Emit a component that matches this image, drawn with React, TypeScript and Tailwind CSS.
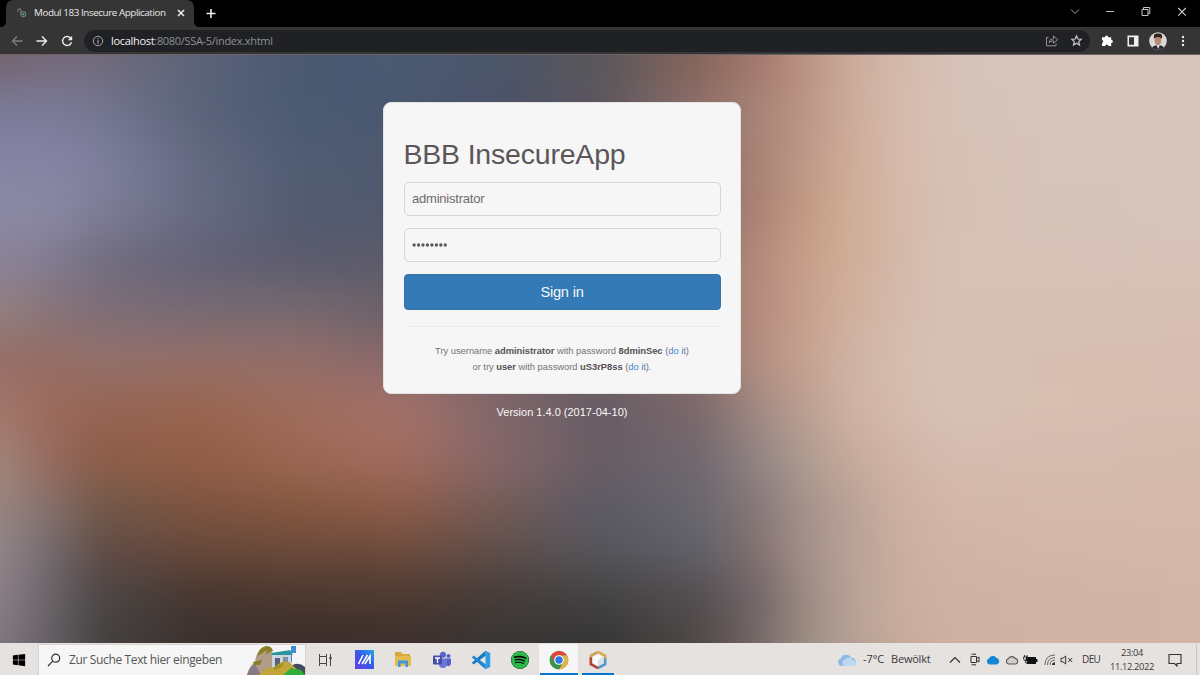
import type { ReactNode } from 'react';
import { FaWindows, FaSpotify } from 'react-icons/fa';

type Row = { y: number; c: string };

const XS = [0, 50, 100, 200, 300, 400, 500, 600, 700, 760, 800, 850, 900, 950, 1050, 1200];

const ROWS: Row[] = [
  { y: 5, c: '74656f 75697a 716a7b 5b6378 4a5870 4a5a72 4b5468 5a5658 85655b a5786d b88f82 cbab9b d4b9ab d6c2b8 d8c6bc d8c6bd' },
  { y: 55, c: '7b7a99 7b7b99 74768f 596379 4a5a72 49586f 4b5369 5b5560 90706a a88577 ba9184 ccab99 d6baad d6c2b7 d7c5bb d7c5bc' },
  { y: 105, c: '8583a2 8383a3 7e7f9e 63697f 4f5c72 4e586e 4b5369 5b5257 906a62 a88476 bb9787 cfab97 d6baac d6c1b5 d7c4ba d7c4bb' },
  { y: 155, c: '8c8aa5 8a88a4 7f7e97 656a82 535b70 50596d 4b5369 5b5257 906a62 ac8377 c0977f d1ae96 d5b8aa d6c1b5 d6c3b9 d7c4ba' },
  { y: 205, c: '8a8298 827c92 716d80 636176 5b5b6d 5c5b6b 5b5867 6b5f62 966f64 b48b7d c59d88 d1ae96 d4b8aa d6c2b6 d6c2b7 d7c3b9' },
  { y: 255, c: '937f80 887479 7e6d77 776a74 756970 6b6068 655c66 6b5f62 986f67 b48b7d c59e8b d1b09c d4baad d6c2b5 d6c1b5 d7c0b5' },
  { y: 305, c: '966f68 966c64 93706a 946e67 936e69 89676a 785f64 6b5f62 8b6d69 b59082 c59f8d cfb2a4 d5bdaf d5c2b6 d6bfb1 d6bdb1' },
  { y: 355, c: 'a3766b 9a6a5a 966454 98654f a06c5c a57269 80676a 665c65 7c686b a28b83 b99c90 cfb2a4 d5baad d5c2b6 d7bfb1 d7bcb0' },
  { y: 405, c: 'a18479 96695f 8c5d48 935d46 9b6753 a16b5d 84676a 685c64 70686f 948484 ab9a8f c6a99a d0b5a7 d5bbae d5baae d4b9ad' },
  { y: 455, c: '97867f 84706c 705848 7d5340 85573f 8c5b48 735b56 5b5a66 69666d 887878 a08e88 b8a196 cdb0a1 d2b6a9 d3b8ab d4b8ab' },
  { y: 495, c: '93858a 736a70 604a45 674839 6b493a 6d4b3d 5f4e4b 55555b 61606a 84726f a28f8a b8a196 caae9f d0b4a6 d2b6a9 d3b7aa' },
  { y: 540, c: '8c8088 6a6468 4c4646 46362f 4b382f 4d3a31 463c39 444243 544e50 74666a 98867f b7a297 c9ad9f ceb2a5 cfb3a5 d2b5a8' },
  { y: 588, c: '83777e 645f66 44413f 3a2f2d 3b2d2b 3d2e2c 373533 343434 4f4846 776968 988a80 b5a095 c7aa9c ceb1a4 d0b3a6 d2b5a8' },
];

function Backdrop() {
  return (
    <svg className="absolute inset-0 h-full w-full" viewBox="0 0 1200 588" preserveAspectRatio="none">
      <defs>
        <filter id="soft" x="-60" y="-60" width="1320" height="708" filterUnits="userSpaceOnUse" colorInterpolationFilters="sRGB">
          <feGaussianBlur stdDeviation="16 20" />
        </filter>
        {ROWS.map((r, i) => (
          <linearGradient key={r.y} id={`row${i}`} gradientUnits="userSpaceOnUse" x1="0" x2="1200" y1="0" y2="0">
            {r.c.split(' ').map((c, k) => (
              <stop key={k} offset={XS[k] / 1200} stopColor={`#${c}`} />
            ))}
          </linearGradient>
        ))}
      </defs>
      <rect width="1200" height="588" fill="#7a6866" />
      <g filter="url(#soft)">
        {ROWS.map((r, i) => {
          const top = i === 0 ? -100 : (ROWS[i - 1].y + r.y) / 2;
          const bottom = i === ROWS.length - 1 ? 700 : (r.y + ROWS[i + 1].y) / 2;
          return <rect key={r.y} x="-60" width="1320" y={top} height={bottom - top + 1} fill={`url(#row${i})`} />;
        })}
      </g>
    </svg>
  );
}

function Icon({ w, h, children, className = '' }: { w: number; h: number; children: ReactNode; className?: string }) {
  return (
    <svg width={w} height={h} viewBox={`0 0 ${w} ${h}`} fill="none" className={`block shrink-0 ${className}`}>
      {children}
    </svg>
  );
}

function TabStrip() {
  return (
    <div className="flex h-[27px] bg-black">
      <Icon w={6} h={27}><path d="M0 27Q6 27 6 21V27Z" fill="#353535" /></Icon>
      <div className="flex w-[188px] items-center rounded-t-[7px] bg-[#353535] pb-px">
        <Icon w={10} h={10} className="ml-[11px]">
          <path d="M1 4V2.3Q1 .8 2.5 .8T4 2.3V6.5" stroke="#777" strokeWidth="1.2" />
          <circle cx="6.3" cy="6.3" r="2.4" stroke="#6c7b7b" strokeWidth="1.3" />
          <circle cx="6.3" cy="6.3" r=".9" fill="#2dd4cf" />
        </Icon>
        <span className="ml-[7px] w-[132px] text-[9.8px] leading-[14px] tracking-[-0.41px] whitespace-nowrap text-[#e8e8e8]">Modul 183 Insecure Application</span>
        <Icon w={8} h={8} className="ml-[11px]"><path d="M1 1L7 7M7 1L1 7" stroke="#eee" strokeWidth="1.5" /></Icon>
      </div>
      <Icon w={6} h={27}><path d="M0 21Q0 27 6 27H0Z" fill="#353535" /></Icon>
      <Icon w={10} h={27} className="ml-[6px]"><path d="M.5 13.5H9.5M5 9V18" stroke="#eee" strokeWidth="1.6" /></Icon>
      <div className="ml-auto flex h-6 items-center">
        <Icon w={10} h={24} className="mr-[25px]"><path d="M1 9.5L5 13.5L9 9.5" stroke="#aaa" /></Icon>
        <Icon w={10} h={24} className="mr-[26px]"><path d="M1 11.5H9" stroke="#bbb" /></Icon>
        <Icon w={10} h={24} className="mr-[26px]"><path d="M1 9.5H7V15.5H1ZM2.5 9.5V7.5H8.8V13.7H7" stroke="#c5c5c5" /></Icon>
        <Icon w={10} h={24} className="mr-[13px]"><path d="M1.2 8L8.8 15.6M8.8 8L1.2 15.6" stroke="#ccc" strokeWidth="1.1" /></Icon>
      </div>
    </div>
  );
}

function Toolbar() {
  return (
    <div className="flex h-[28px] items-center border-b border-[#6b6365] bg-[#353535]">
      <Icon w={12} h={12} className="ml-[11px]"><path d="M11.5 6H1.5M6 1.5L1.5 6L6 10.5" stroke="#7d7d7d" strokeWidth="1.3" /></Icon>
      <Icon w={12} h={12} className="ml-[13px]"><path d="M.5 6H10.5M6 1.5L10.5 6L6 10.5" stroke="#eee" strokeWidth="1.4" /></Icon>
      <Icon w={12} h={12} className="ml-[13px]">
        <path d="M9.6 3.2A4.5 4.5 0 1 0 10.4 7.2" stroke="#eee" strokeWidth="1.4" />
        <path d="M11.2 .8V5.2H6.8Z" fill="#eee" />
      </Icon>
      <div className="ml-[11px] flex h-[22px] w-[1006px] items-center rounded-full bg-[#202124]">
        <Icon w={12} h={12} className="ml-[8px]">
          <circle cx="6" cy="6" r="4.7" stroke="#a5a7ab" />
          <path d="M6 5.2V8.5M6 3.2V4.3" stroke="#a5a7ab" strokeWidth="1.2" />
        </Icon>
        <span className="ml-[7px] text-[11px] leading-[16px] tracking-[-0.31px] whitespace-nowrap text-[#8f9093]"><span className="text-[#f1f1f1]">localhost</span>:8080/SSA-5/index.xhtml</span>
        <Icon w={14} h={13} className="ml-auto">
          <path d="M3.5 3.5H1.5V11.8H11V9.5" stroke="#939393" />
          <path d="M4 8.8Q4.5 4.7 8.5 4.6V2L12.7 5.7L8.5 9.2V6.8Q5.5 6.8 4 8.8Z" stroke="#939393" />
        </Icon>
        <Icon w={13} h={13} className="mr-[7px] ml-[11px]">
          <path d="M6.5 1.9L7.9 5L11.2 5.3L8.7 7.6L9.5 11L6.5 9.2L3.5 11L4.3 7.6L1.8 5.3L5.1 5Z" stroke="#ccc" strokeWidth="1.2" />
        </Icon>
      </div>
      <Icon w={13} h={13} className="ml-[11px]">
        <path d="M1 3.2H4A1.6 1.6 0 0 1 7.2 3.2H10.2V5.8A1.6 1.6 0 0 1 10.2 9.1V12H7.5A1.6 1.6 0 0 0 4.3 12H1V9.2A1.7 1.7 0 0 0 1 6Z" fill="#fff" />
      </Icon>
      <Icon w={12} h={12} className="ml-[13px]"><path d="M.5 .5H11.5V11.5H.5ZM2 2.2V9.8H7V2.2Z" fill="#f1f1f1" fillRule="evenodd" /></Icon>
      <Icon w={18} h={18} className="ml-[10px]">
        <clipPath id="avatar"><circle cx="9" cy="9" r="8.8" /></clipPath>
        <g clipPath="url(#avatar)">
          <rect width="18" height="18" fill="#dcd7d4" />
          <path d="M2 18Q3 13 9 13.2Q15 13 16 18Z" fill="#252832" />
          <path d="M7 12H11L9.3 17Z" fill="#f1eeee" />
          <ellipse cx="9" cy="8.5" rx="3.3" ry="5" fill="#b88874" />
          <path d="M5.2 7Q3.5 1.4 9 1.6Q14.5 1.4 12.8 7Q12 5 9 5.1Q6 5 5.2 7Z" fill="#292321" />
        </g>
      </Icon>
      <Icon w={4} h={12} className="ml-[14px]">
        <circle cx="2" cy="2" r="1.2" fill="#eee" /><circle cx="2" cy="6" r="1.2" fill="#eee" /><circle cx="2" cy="10" r="1.2" fill="#eee" />
      </Icon>
    </div>
  );
}

function LoginPage() {
  return (
    <main className="relative h-[588px] overflow-hidden font-['Liberation_Sans',Arial,sans-serif]">
      <Backdrop />
      <div className="relative ml-[383px] w-[358px] pt-[47px]">
        <form className="h-[292px] rounded-[8px] border border-[#e4e2e2] bg-[#f6f6f6] px-[19.5px] pt-[33px]" onSubmit={(e) => e.preventDefault()}>
          <h1 className="mb-[9px] h-[37px] text-[28.5px] leading-[36px] tracking-[-0.2px] whitespace-nowrap text-[#5c5559]">BBB InsecureApp</h1>
          <input className="mb-3 block h-[34px] w-[317px] rounded-[5px] border border-[#d7d5d5] bg-transparent px-[7.5px] pb-[2px] text-[13px] tracking-[-0.22px] text-[#706a6d] outline-none" defaultValue="administrator" />
          <div className="mb-3 flex h-[34px] w-[317px] items-center rounded-[5px] border border-[#d7d5d5] px-[7.5px]">
            <Icon w={36} h={6}>
              {Array.from({ length: 8 }, (_, i) => <circle key={i} cx={2.1 + i * 4.45} cy="3" r="1.65" fill="#5c5559" />)}
            </Icon>
          </div>
          <button className="flex h-[36px] w-[317px] items-center justify-center rounded-[4px] border border-[#3472a8] bg-[#337ab7] pt-px text-[14.6px] tracking-[-0.2px] text-[#f6f6f6]">Sign in</button>
          <hr className="mt-[16px] w-[317px] border-[#ececec]" />
          <p className="mt-[16px] w-[317px] text-center text-[9.4px] leading-[16px] tracking-[-0.03px] whitespace-nowrap text-[#777275]">
            Try username <b className="text-[#555055]">administrator</b> with password <b className="text-[#555055]">8dminSec</b> (<span className="text-[#4585c0]">do it</span>)
            <br />
            or try <b className="text-[#555055]">user</b> with password <b className="text-[#555055]">uS3rP8ss</b> (<span className="text-[#4585c0]">do it</span>).
          </p>
        </form>
        <p className="mt-[10px] text-center text-[11px] leading-[16px] text-[#f9f7f7]">Version 1.4.0 (2017-04-10)</p>
      </div>
    </main>
  );
}

function Slot({ children, active = false, line = false }: { children: ReactNode; active?: boolean; line?: boolean }) {
  return (
    <div className={`flex w-[38.9px] justify-center ${active ? 'bg-[#f7f6f6]' : ''}`}>
      <div className={`flex h-[31px] items-center justify-center border-b-2 pt-[2px] ${active ? 'w-[38px]' : 'w-8'} ${line ? 'border-[#0874cb]' : 'border-transparent'}`}>{children}</div>
    </div>
  );
}

function Apps() {
  return (
    <div className="flex">
      <Slot>
        <Icon w={15} h={14}>
          <path d="M1.5 1V3.5H8.5V1M1.5 13V10.5H8.5V13M1.5 3.5V10.5M8.5 3.5V10.5" stroke="#444" />
          <path d="M12.5 1V13" stroke="#444" /><path d="M11.5 4H13.5V6.2H11.5Z" fill="#333" />
        </Icon>
      </Slot>
      <Slot>
        <Icon w={19} h={19}>
          <defs><linearGradient id="asus" x1="0" y1="1" x2="1" y2="0"><stop stopColor="#6540e8" /><stop offset=".5" stopColor="#3559e7" /><stop offset="1" stopColor="#28a5ec" /></linearGradient></defs>
          <rect width="19" height="19" fill="url(#asus)" />
          <path d="M3.5 14L8 5M7 14L12.5 5M9.8 14L15 6V14" stroke="#fff" strokeWidth="1.6" />
        </Icon>
      </Slot>
      <Slot>
        <Icon w={18} h={17}>
          <path d="M1 1H7L8.5 3H16V6H17V15H1Z" fill="#d5aa36" /><path d="M1 5H17V15H1Z" fill="#e0bc52" />
          <path d="M4 16V9.5H14V16H11.5V12.5H6.5V16Z" fill="#3d97e0" />
        </Icon>
      </Slot>
      <Slot>
        <Icon w={20} h={18}>
          <circle cx="16.5" cy="5" r="2" fill="#5560c9" /><circle cx="11" cy="3.8" r="3" fill="#5a64cc" />
          <path d="M13 7.5H19V12Q19 15 16 15.2L13 13Z" fill="#5560c9" />
          <path d="M7 7.5H15V12.5Q15 17 11 17Q7 17 7 13Z" fill="#6b75da" />
          <rect x="1" y="4.5" width="9" height="9" rx="1" fill="#444fac" />
          <path d="M3 7H8M5.5 7V12" stroke="#fff" strokeWidth="1.4" />
        </Icon>
      </Slot>
      <Slot>
        <Icon w={20} h={20}>
          <path d="M14.5 .8L19.2 3V17L14.5 19.2Z" fill="#2f9de6" />
          <path d="M14.5 .8L.8 12.8L2.6 14.5L14.5 5.7Z" fill="#1677bd" />
          <path d="M14.5 19.2L.8 7.2L2.6 5.5L14.5 14.3Z" fill="#1c86d0" />
        </Icon>
      </Slot>
      <Slot>
        <div className="rounded-full bg-black"><FaSpotify className="h-[18px] w-[18px] text-[#2fb84e]" /></div>
      </Slot>
      <Slot active line>
        <Icon w={20} h={20}>
          <circle cx="10" cy="10" r="9.3" fill="#d94a3d" />
          <path d="M10 5.5H18.2A9.3 9.3 0 0 1 10 19.3L14 12.2Z" fill="#dbb545" />
          <path d="M1.9 5.4A9.3 9.3 0 0 0 10 19.3L14 12.2L6 12.2Z" fill="#36964c" />
          <circle cx="10" cy="10" r="4.8" fill="#fff" /><circle cx="10" cy="10" r="3.7" fill="#2e75e8" />
        </Icon>
      </Slot>
      <Slot line>
        <Icon w={18} h={20}>
          <path d="M9 4L14 7V13L9 16L4 13V7Z" fill="#f9f9f9" /><path d="M9 10V17L14.5 13.5V6.5Z" fill="#dedfe1" />
          <path d="M9 1.8L1.8 5.8V10" stroke="#c9a257" strokeWidth="2.5" />
          <path d="M9 1.8L16.2 5.8V8" stroke="#d8ad49" strokeWidth="2.5" />
          <path d="M16.2 8V14.2L9 18.2" stroke="#4e98cb" strokeWidth="2.5" />
          <path d="M9 18.2L1.8 14.2V7.5" stroke="#b54334" strokeWidth="2.5" />
        </Icon>
      </Slot>
    </div>
  );
}

function Cloud({ fill, stroke }: { fill: string; stroke: string }) {
  return (
    <Icon w={14} h={10}>
      <path d="M3.5 9A2.7 2.7 0 0 1 3.3 3.8A4 4 0 0 1 10.2 3.4A2.9 2.9 0 0 1 10.8 9Z" fill={fill} stroke={stroke} strokeWidth="1.1" />
    </Icon>
  );
}

function Tray() {
  return (
    <div className="ml-auto flex items-center text-[#383838]">
      <Icon w={20} h={14}>
        <path d="M4.5 13A4 4 0 0 1 4 5.2A5.5 5.5 0 0 1 14 4.8A4.1 4.1 0 0 1 15.5 13Z" fill="#8dbbe5" />
        <path d="M7.5 13A3.4 3.4 0 0 1 8 6.5A4.5 4.5 0 0 1 15.8 7A3 3 0 0 1 16 13Z" fill="#bcd8f2" />
      </Icon>
      <span className="ml-[6px] w-[22px] text-[11px] tracking-[-0.1px] whitespace-nowrap">-7°C</span>
      <span className="ml-[6px] w-[40px] text-[11px] tracking-[-0.2px] whitespace-nowrap">Bewölkt</span>
      <Icon w={12} h={8} className="ml-[18px]"><path d="M1 6.5L6 1.5L11 6.5" stroke="#333" strokeWidth="1.2" /></Icon>
      <Icon w={12} h={13} className="ml-[8px]">
        <path d="M2 3.5H7.5V9.5H2ZM7.5 5.5L10 4V9L7.5 7.5M2.5 1.2H7M2.5 11.8H7" stroke="#333" />
      </Icon>
      <div className="ml-[5px]"><Cloud fill="#1686d9" stroke="#1686d9" /></div>
      <div className="ml-[5px]"><Cloud fill="#d0cecd" stroke="#555" /></div>
      <Icon w={15} h={10} className="ml-[4px]">
        <path d="M3 2H13V4H14.5V7H13V9H4V6H2.5Z" fill="#111" /><path d="M1.5 0V2M4 0V2M.5 2H5V4Q5 5.5 2.7 5.5T.5 3.5ZM2.7 5V8H5" stroke="#222" strokeWidth=".9" />
      </Icon>
      <Icon w={12} h={12} className="ml-[6px]">
        <path d="M1 11Q1 1 11 1M3.5 11Q3.5 3.7 11 3.7M6 11Q6 6.2 11 6.2" stroke="#666" /><path d="M8 11Q8 8.2 11 8.2V11Z" fill="#333" />
      </Icon>
      <Icon w={14} h={10} className="ml-[4px]"><path d="M1 3.2H3L5.7 1V9L3 6.8H1ZM8.2 3L12.2 7M12.2 3L8.2 7" stroke="#333" /></Icon>
      <span className="ml-[8px] w-[18px] text-[10px] tracking-[-0.6px] whitespace-nowrap">DEU</span>
      <div className="ml-[9px] w-[46px] text-center text-[9.3px] leading-[14px] tracking-[-0.35px] whitespace-nowrap"><div>23:04</div><div>11.12.2022</div></div>
      <Icon w={14} h={14} className="ml-[13px]"><path d="M1 1.5H13V10.5H9V13L6.5 10.5H1Z" stroke="#333" strokeWidth="1.1" /></Icon>
      <div className="ml-[14px] h-8 w-[4px] border-l border-[#c9c5c4]" />
    </div>
  );
}

function Taskbar() {
  return (
    <footer className="flex h-8 bg-[#e6e2e0] pt-px">
      <div className="flex w-[37px] items-center justify-center"><FaWindows className="h-[14px] w-[14px] text-black" /></div>
      <div className="ml-px flex w-[268px] items-center border-x border-t border-[#d6d4d3] bg-[#f6f6f6]">
        <Icon w={14} h={14} className="ml-[8px]"><circle cx="8.7" cy="5.2" r="4" stroke="#333" strokeWidth="1.2" /><path d="M5.8 8.2L1 13" stroke="#333" strokeWidth="1.2" /></Icon>
        <span className="ml-[8px] w-[156px] text-[12px] tracking-[-0.36px] whitespace-nowrap text-[#555]">Zur Suche Text hier eingeben</span>
        <Icon w={60} h={30} className="ml-auto">
          <path d="M2 30Q5 20 10 17Q11 7 17 3Q24 0 27 8Q28 16 26 30Z" fill="#b29c88" />
          <path d="M2 30Q4 22 10 19L16 30Z" fill="#877a85" />
          <path d="M13 9Q15 2 21 1Q27 1 28 6L21 9L22 5L13 11ZM8 17L17 15L15 20L9 20Z" fill="#8b7f24" />
          <path d="M27 9H47V24H27Z" fill="#cdd3dc" /><path d="M26 8L45 5L48 10H27Z" fill="#28969c" />
          <path d="M46.5 2V17" stroke="#438cd6" /><path d="M46 1H51V8H46Z" fill="#438cd6" />
          <path d="M30 13H35V22H30Z" fill="#53627a" /><path d="M38 12H43V18H38Z" fill="#8290a3" />
          <path d="M46 30V21Q53 16 60 22V30Z" fill="#454a63" />
          <path d="M14 30Q20 22 30 22Q37 15 44 17L58 30Z" fill="#c2a538" />
          <path d="M38 30L46 23L56 25L60 30Z" fill="#2fae38" />
          <path d="M28 23L39 17L37 22L30 25Z" fill="#9c9424" />
        </Icon>
      </div>
      <Apps />
      <Tray />
    </footer>
  );
}

export default function App() {
  return (
    <div className="h-[675px] w-[1200px] overflow-hidden font-['Open_Sans','Noto_Sans',sans-serif]">
      <TabStrip />
      <Toolbar />
      <LoginPage />
      <Taskbar />
    </div>
  );
}
